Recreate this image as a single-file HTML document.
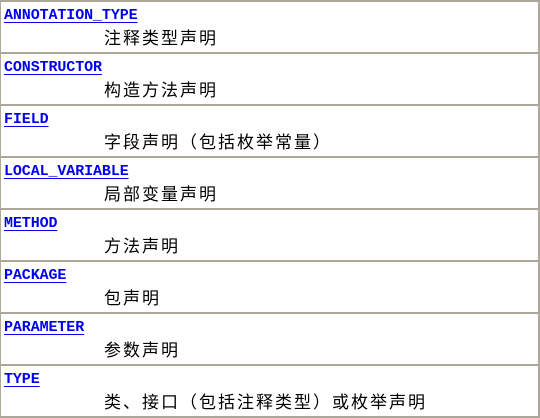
<!DOCTYPE html>
<html><head><meta charset="utf-8"><style>
body{margin:0;width:540px;height:418px;background:#fff;overflow:hidden;position:relative}
.r{position:absolute;left:0;width:537px;height:50px;border-left:1px solid #aca899;border-right:2px solid #aca899;border-top:2px solid #aca899}
.r a{position:absolute;left:3px;top:5px;font:bold 15px "Liberation Mono",monospace;color:#0000ee;text-decoration:underline;text-underline-offset:3px;letter-spacing:-0.1px}
.r span{position:absolute;left:103px;top:22px;font:17px "Noto Sans CJK SC",sans-serif;color:#000;letter-spacing:2px;font-feature-settings:"fwid"}
</style></head><body>
<div class="r" style="top:0"><a>ANNOTATION_TYPE</a><span>注释类型声明</span></div>
<div class="r" style="top:52px"><a>CONSTRUCTOR</a><span>构造方法声明</span></div>
<div class="r" style="top:104px"><a>FIELD</a><span>字段声明（包括枚举常量）</span></div>
<div class="r" style="top:156px"><a>LOCAL_VARIABLE</a><span>局部变量声明</span></div>
<div class="r" style="top:208px"><a>METHOD</a><span>方法声明</span></div>
<div class="r" style="top:260px"><a>PACKAGE</a><span>包声明</span></div>
<div class="r" style="top:312px"><a>PARAMETER</a><span>参数声明</span></div>
<div class="r" style="top:364px;height:50px;border-bottom:2px solid #aca899"><a>TYPE</a><span>类、接口（包括注释类型）或枚举声明</span></div>
</body></html>
